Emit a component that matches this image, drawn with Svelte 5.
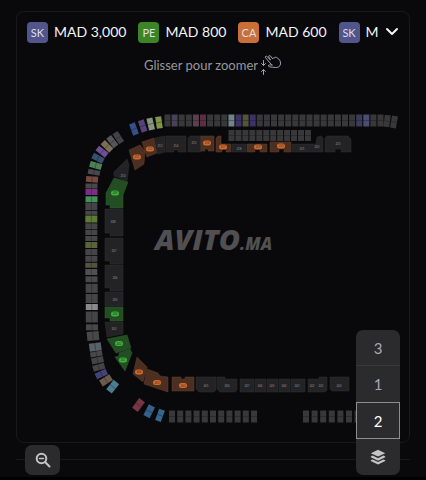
<script>
  const prices = [
    { code: 'SK', price: 'MAD 3,000', tone: 'blue' },
    { code: 'PE', price: 'MAD 800', tone: 'green' },
    { code: 'CA', price: 'MAD 600', tone: 'orange' },
    { code: 'SK', price: 'M', tone: 'blue' }
  ];
  const floors = ['3', '1', '2'];
  let floor = $state('2');

  const grey = '#38383a';
  const row = (count, x, y, pitch, h, tints = {}) =>
    Array.from({ length: count }, (_, i) => ({ x: x + i * pitch, y, w: 6, h, r: 0, c: tints[i] ?? grey }));

  // Suites: centre point, size, rotation and tint
  const suites = [
    ...row(31, 167.5, 120.5, 7.1, 12, {
      1: '#4a4058', 4: '#5c3f4c', 5: '#5a3040', 9: '#728388', 10: '#3d3168',
      11: '#50553c', 12: '#3d3168', 27: '#3b3b5c', 28: '#4c4c70'
    }),
    ...row(12, 231.5, 135.5, 6.95, 11),
    ...row(11, 172, 416.5, 8.2, 12),
    ...row(7, 306, 416.5, 8.6, 12),
    ...[
      [387, 121, 6, 12, 8, grey], [394, 122, 6, 12, 10, grey],
      [134, 129, 6, 12, -20, '#33508a'], [142.7, 126, 6, 12, -18, '#57427a'],
      [150.7, 124, 6, 12, -13, '#87957f'], [159, 122.5, 6, 12, -8, '#7f9648'],
      [118.3, 137.7, 6, 12, -33, '#454047'], [112.3, 141.7, 6, 12, -38, '#56565a'],
      [107, 146.3, 6, 12, -45, '#7d6f55'], [102, 151.7, 6, 12, -52, '#6d4f94'],
      [98, 158.3, 6, 12, -62, '#355070'], [95.7, 165.5, 6, 12, -74, '#4f8055'],
      [94, 172.3, 5, 12, -80, '#48484a'], [92, 179.3, 12, 6, 4, '#754842'],
      [91.5, 186, 12, 5, 0, '#48484a'], [91.5, 192, 12, 6, 0, '#7a2f85'],
      [91.5, 199.3, 12, 6, 0, '#43905a'], [91.3, 206.5, 12, 7, 0, '#444446'],
      [91.3, 212.8, 12, 4, 0, '#48484a'], [91.3, 219, 12, 7, 0, '#5d7a35'],
      [91.3, 226.3, 12, 6, 0, '#454547'], [91.3, 232.5, 12, 5, 0, '#454547'],
      [91.3, 238.5, 12, 5, 0, '#454547'], [91.3, 245, 12, 6, 0, '#5b633b'],
      [91.3, 252, 12, 6, 0, '#454547'], [91.3, 258.8, 12, 6, 0, '#454547'],
      [91.3, 265.3, 12, 5, 0, '#53533e'], [91.3, 272, 12, 6, 0, '#505053'],
      [91.5, 279.3, 12, 6, 0, '#48484a'], [91.7, 288.3, 12, 9, 0, '#454547'],
      [91.7, 298.5, 12, 9, 0, '#454547'], [91.8, 307, 12, 6, 0, '#8a8a8c'],
      [91.8, 317, 12, 11, 0, '#454547'], [92, 327.3, 12, 6, 0, '#48484a'],
      [93, 336, 12, 9, -5, '#48484a'], [95.3, 347, 12, 8, -8, '#596068'],
      [96.3, 354, 12, 5, -9, '#48484a'], [97.5, 360.3, 12, 6, -12, '#444446'],
      [98.8, 367.3, 12, 6, -16, '#444446'], [101.3, 374, 12, 6, -25, '#43437a'],
      [106, 380.3, 12, 7, -32, '#6b5b4e'], [112.7, 386.7, 7, 12, 38, '#4a7d90'],
      [138.5, 405, 7, 12, 36, '#7a3545'], [149.2, 411.3, 7, 12, 27, '#34608a'],
      [160, 415.3, 6, 12, 20, '#34688e']
    ].map(([x, y, w, h, r, c]) => ({ x, y, w, h, r, c }))
  ];

  // Seating blocks: outline, label and label position
  const blocks = [
    { k: 'o', p: '129,150 140,145 145,151 144,164 135,170', n: '211', x: 137, y: 157 },
    { k: 'o', p: '142,142 154,138 157,153 147,157', n: '212', x: 150, y: 149 },
    { k: 'd', p: '155,138 165,136 165,152 158,154', n: '213', x: 160, y: 146 },
    { k: 'd', p: '166,136 186,136 186,152 178,152 178,150 174,150 174,152 166,152', n: '214', x: 176, y: 146 },
    { k: 'd', p: '188,138 190,136 201,136 201,152 188,152', n: '215', x: 194, y: 143 },
    { k: 'o', p: '201,136 214,136 214,151 208,151 208,149 205,149 205,151 201,151', n: '216', x: 207, y: 143 },
    { k: 'o', p: '216,138 218,136 221,136 221,144 231,144 231,152 226,152 226,149 222,149 222,152 216,152', n: '217', x: 223, y: 147 },
    { k: 'd', p: '232,144 246,144 246,152 232,152', n: '218', x: 239, y: 149 },
    { k: 'o', p: '247,144 267,144 267,152 260,152 260,149 255,149 255,152 247,152', n: '219', x: 258, y: 147 },
    { k: 'o', p: '270,142 291,142 291,152 284,152 284,149 279,149 279,152 270,152', n: '220', x: 281, y: 146 },
    { k: 'd', p: '292,144 316,144 317,137 321,136 323,138 323,152 292,152', n: '221', x: 302, y: 149 },
    { k: 'n', p: '', n: '222', x: 317, y: 147 },
    { k: 'd', p: '325,138 327,136 348,136 351,139 351,152 341,152 341,149 335,149 335,152 325,152', n: '223', x: 338, y: 144 },
    { k: 'd', p: '127,159 129,165 127,181 114,176 114,172', n: '210', x: 123, y: 176 },
    { k: 'g', p: '114,178 128,182 123,195 123,208 110,208 110,205 106,205 106,193', n: '209', x: 115, y: 193 },
    { k: 'd', p: '105,209 123,209 123,236 110,236 110,233 105,233', n: '208', x: 113, y: 222 },
    { k: 'd', p: '105,238 123,238 123,264 110,264 110,261 105,261', n: '207', x: 114, y: 251 },
    { k: 'd', p: '105,265 123,265 123,291 110,291 110,288 105,288', n: '206', x: 115, y: 278 },
    { k: 'd', p: '105,292 123,292 123,306 105,306', n: '205', x: 115, y: 300 },
    { k: 'g', p: '105,307 123,307 123,321 110,321 110,318 105,318', n: '204', x: 115, y: 314 },
    { k: 'd', p: '105,322 123,322 123,334 107,337', n: '203', x: 114, y: 329 },
    { k: 'g', p: '107,339 127,335 131,348 116,353 114,350', n: '202', x: 119, y: 343.5 },
    { k: 'g', p: '115,357 119,356 119,353 130,349 132,353 125,371', n: '201', x: 123, y: 360 },
    { k: 'o', p: '137,357 147,367 143,382 133,374', n: '264', x: 139, y: 372 },
    { k: 'o', p: '147,369 158,373 160,376 168,377 168,392 144,384', n: '263', x: 157, y: 382.5 },
    { k: 'o', p: '172,377 181,377 181,379 185,379 185,377 194,377 194,391 172,391', n: '262', x: 183, y: 385.5 },
    { k: 'd', p: '196,377 216,377 216,390 214,392 199,392 196,389', n: '261', x: 206, y: 386 },
    { k: 'd', p: '217,377 225,377 225,379 237,379 237,390 235,392 220,392 217,389', n: '260', x: 227, y: 386 },
    { k: 'd', p: '240,379 254,379 254,392 240,392', n: '247', x: 247, y: 386 },
    { k: 'd', p: '255,379 266,379 266,392 255,392', n: '246', x: 260, y: 386 },
    { k: 'd', p: '267,379 278,379 278,392 267,392', n: '245', x: 272, y: 386 },
    { k: 'd', p: '279,379 290,379 290,392 279,392', n: '244', x: 284, y: 386 },
    { k: 'd', p: '291,379 305,379 305,392 291,392', n: '243', x: 297, y: 386 },
    { k: 'd', p: '308,379 319,379 319,377 327,377 327,390 325,392 308,392', n: '242', x: 312, y: 386 },
    { k: 'n', p: '', n: '241', x: 321, y: 386 },
    { k: 'd', p: '330,377 349,377 349,391 332,391 330,389', n: '240', x: 339, y: 386 }
  ];
</script>

<main>
  <section class="card">
    <header>
      <ul>
        {#each prices as item}
          <li><span class="chip {item.tone}">{item.code}</span><span>{item.price}</span></li>
        {/each}
      </ul>
      <button class="more" aria-label="Afficher les prix">
        <svg width="14" height="10" viewBox="0 0 14 10"><path d="M2 2l5 5 5-5" fill="none" stroke="#f4f4f5" stroke-width="2" stroke-linecap="round" stroke-linejoin="round" /></svg>
      </button>
    </header>

    <p class="hint">
      <span>Glisser pour zoomer</span>
      <svg width="22" height="22" viewBox="0 0 22 22" fill="none" stroke="#a1a1aa" stroke-width="1" stroke-linecap="round" stroke-linejoin="round">
        <path d="M3.500 6.500v5M1.500 9.500l2 2 2-2M3.500 20.500v-5M1.500 17.500l2-2 2 2" />
        <path d="M11 10L5.500 3.800c-.8-1 .5-2.200 1.400-1.300L10.500 6 8.800 3c-.6-1.300 1-2 1.700-1l2.300 3c.1-1.200 1-1.600 1.900-1 .3-1 1.300-1.200 2-.4 2.500 1 4.300 4 3.800 6.500-.4 2.500-2.500 3.500-5 3.400-2.300 0-3.700-.5-6-.7-1.500-.2-1.400-1.800 0-1.900l2.500.1z" />
      </svg>
    </p>

    <svg class="map" viewBox="17 80 392 361" role="img" aria-label="Plan de salle">
      {#each suites as s}
        <g transform="translate({s.x} {s.y}) rotate({s.r})">
          <rect x={-s.w / 2} y={-s.h / 2} width={s.w} height={s.h} fill={s.c} />
          <path d={s.h > s.w ? `M${-s.w / 2} 0H${s.w / 2}` : `M0 ${-s.h / 2}V${s.h / 2}`} class="split" />
        </g>
      {/each}
      {#each blocks as b}
        {#if b.p}<polygon points={b.p} class={b.k} />{/if}
        {#if b.k === 'o' || b.k === 'g'}
          <rect x={b.x - 4} y={b.y - 2.5} width="8" height="5" rx="2.500" class="pill {b.k}" />
        {/if}
        <text x={b.x} y={b.y + 1} class="no {b.k}">{b.n}</text>
      {/each}
      <text x="155" y="250" class="mark">AVITO<tspan class="tld">.MA</tspan></text>
    </svg>
  </section>

  <footer>
    <button class="zoom" aria-label="Dézoomer">
      <svg width="16" height="16" viewBox="0 0 16 16" fill="none" stroke="#c4c4c6" stroke-width="2" stroke-linecap="round">
        <circle cx="6.500" cy="6.500" r="4.800" /><path d="M10.300 10.300l4.200 4.200" /><path d="M4.500 6.500h4" stroke-width="1.500" />
      </svg>
    </button>
    <div class="floors">
      {#each floors as f}
        <button class:active={floor === f} aria-pressed={floor === f} onclick={() => (floor = f)}>{f}</button>
      {/each}
      <button aria-label="Niveaux">
        <svg width="16" height="16" viewBox="0 0 16 16" fill="#c4c4c6">
          <path d="M8 .8l7.200 3.400L8 7.600.8 4.200z" />
          <path d="M.8 7.400l1.800-.8L8 9.200l5.400-2.600 1.800.8v.9L8 11.700.8 8.300z" />
          <path d="M.8 11.300l1.800-.8L8 13.100l5.400-2.600 1.800.8v.8L8 15.500.8 12.100z" />
        </svg>
      </button>
    </div>
  </footer>
</main>

<style>
  :global(body) { background: #09090b; }
  main {
    padding: 11px 16px 0;
    color: #f4f4f5;
    font-family: Lato, "Open Sans", sans-serif;
    border-bottom: 3px solid #000;
  }
  button { border: 0; padding: 0; background: none; color: inherit; font: inherit; cursor: pointer; }
  .card { padding-bottom: 1px; border: 1px solid #19191c; border-radius: 8px; }
  header { display: flex; align-items: center; gap: 3px; padding: 9px 10px 0; }
  ul { flex: 1; display: flex; gap: 12px; margin: 0; padding: 0; overflow: hidden; list-style: none; }
  li { display: flex; flex: none; align-items: center; gap: 6px; font-size: 14px; line-height: 22px; }
  .chip { width: 21px; border-radius: 4px; font-size: 11px; line-height: 21px; text-align: center; color: #dedee6; }
  .blue { background: #51558c; }
  .green { background: #3c8527; }
  .orange { background: #c87038; }
  .more { display: flex; width: 14px; height: 22px; align-items: center; }
  .hint { display: flex; justify-content: center; align-items: center; gap: 2px; margin: 11px 0 0; color: #97979b; font-size: 13px; line-height: 22px; }
  .map { display: block; width: 100%; height: auto; margin-top: 4px; }
  .split { stroke: #18181a; stroke-width: 0.6; opacity: 0.6; }
  polygon.d { fill: #232325; stroke: #303033; stroke-width: 0.5; }
  polygon.o { fill: #4c2f20; stroke: #62402d; stroke-width: 0.5; }
  polygon.g { fill: #234d23; stroke: #2e602c; stroke-width: 0.5; }
  .pill.o { fill: #cc6c32; }
  .pill.g { fill: #41b13c; }
  .no { font-size: 3px; text-anchor: middle; fill: #8b8b8e; }
  .no.o { fill: #542a15; }
  .no.g { fill: #154017; }
  .mark { fill: #505052; font: italic 800 29px "Open Sans", sans-serif; }
  .tld { font-size: 17px; }
  footer { position: relative; height: 34px; }
  footer::before { content: ""; position: absolute; left: 0; right: 0; top: 16px; border-top: 1px solid #19191c; }
  .zoom { position: absolute; left: 9px; bottom: 2px; display: grid; place-items: center; width: 35px; height: 30px; border-radius: 7px; background: #2b2b2d; }
  .floors { position: absolute; right: 10px; bottom: 2px; width: 44px; border-radius: 7px; background: #2b2b2d; }
  .floors button { box-sizing: border-box; display: grid; place-items: center; width: 100%; height: 36px; color: #a9a9ac; font-size: 15px; }
  .floors button:first-child { border-bottom: 1px solid #39393b; }
  .floors .active { height: 37px; border: 1px solid #8e8e90; color: #fff; }
</style>
